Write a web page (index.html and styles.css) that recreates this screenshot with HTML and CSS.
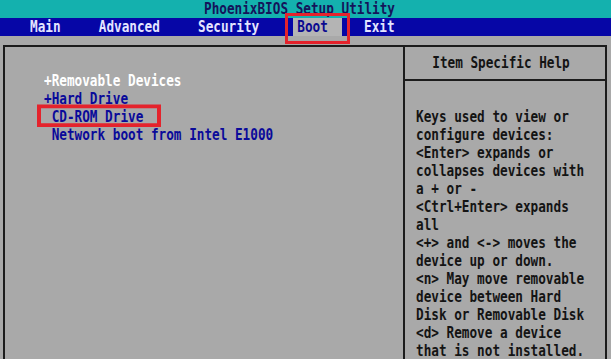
FILE: index.html
```html
<!DOCTYPE html>
<html lang="en">
<head>
  <meta charset="UTF-8" />
  <title>PhoenixBIOS Setup Utility</title>
  <link rel="stylesheet" href="styles.css">
</head>
<body>

<div class="title"><span class="txt">PhoenixBIOS Setup Utility</span></div>

<nav class="menu">
  <span class="tab"><span class="txt">Main</span></span>
  <span class="tab"><span class="txt">Advanced</span></span>
  <span class="tab"><span class="txt">Security</span></span>
  <span class="tab active"><span class="txt">Boot</span><span class="mark mark-tab"></span></span>
  <span class="tab"><span class="txt">Exit</span></span>
</nav>

<div class="screen">
  <div class="frame">
    <div class="boot-list">
      <div class="item white">+Removable Devices</div>
      <div class="item">+Hard Drive</div>
      <div class="item"> <span class="selected">CD-ROM Drive<span class="mark mark-item"></span></span></div>
      <div class="item"> Network boot from Intel E1000</div>
    </div>
    <div class="help">
      <div class="help-title"><span class="txt">Item Specific Help</span></div>
      <div class="help-text">
        <div class="line">Keys used to view or</div>
        <div class="line">configure devices:</div>
        <div class="line">&lt;Enter&gt; expands or</div>
        <div class="line">collapses devices with</div>
        <div class="line">a + or -</div>
        <div class="line">&lt;Ctrl+Enter&gt; expands</div>
        <div class="line">all</div>
        <div class="line">&lt;+&gt; and &lt;-&gt; moves the</div>
        <div class="line">device up or down.</div>
        <div class="line">&lt;n&gt; May move removable</div>
        <div class="line">device between Hard</div>
        <div class="line">Disk or Removable Disk</div>
        <div class="line">&lt;d&gt; Remove a device</div>
        <div class="line">that is not installed.</div>
      </div>
    </div>
  </div>
</div>

</body>
</html>
```

FILE: styles.css
```css
body {
  margin: 0;
  width: 611px;
  height: 359px;
  overflow: hidden;
  background-color: #a9a9a9;
  font-family: "DejaVu Sans Mono", "Liberation Mono", monospace;
  font-size: 12.7px;
  font-weight: bold;
  line-height: 18px;
}

/* the BIOS font is taller than a normal monospace one */
.txt {
  display: inline-block;
  transform: scaleY(1.25);
}

.title {
  height: 18px;
  background-color: #14b1ae;
  color: #14145a;
  text-align: center;
  padding-right: 12px;
}

.menu {
  height: 18px;
  background-color: #0606a6;
  color: #e4e4ff;
  display: flex;
  gap: 5ch;
  padding-left: 30px;
}

.tab {
  position: relative;
}

.tab.active {
  background-color: #b4b4b4;
  color: #0a0a90;
  padding: 0 14px 0 4px;
  margin-left: -6px;
  margin-right: -18px;
  border-left: 2px solid #0606a6;
  border-right: 2px solid #0606a6;
}

.mark {
  position: absolute;
  border: 3px solid #e4232c;
}

.mark-tab {
  left: -8px;
  right: -8px;
  top: -5px;
  bottom: -8px;
}

.screen {
  padding: 9px 4px 0 3px;
}

.frame {
  height: 320px;
  display: grid;
  grid-template-columns: 400px 1fr;
  border: 2px solid #1c1c1c;
  border-bottom: none;
}

.boot-list {
  padding: 25px 0 0 39px;
  color: #0a0a9a;
  border-right: 2px solid #1c1c1c;
}

.item {
  white-space: pre;
  transform: scaleY(1.25);
}

.item.white {
  color: #ffffff;
}

.selected {
  position: relative;
}

.mark-item {
  left: -15px;
  right: -18px;
  top: -2px;
  bottom: -1px;
  border-width: 3px 4px;
}

.help {
  color: #141414;
}

.help-title {
  box-sizing: border-box;
  height: 34px;
  padding: 7px 8px 0 0;
  text-align: center;
  border-bottom: 2px solid #1c1c1c;
}

.help-text {
  padding: 27px 0 0 11px;
}

.line {
  white-space: pre;
  transform: scaleY(1.25);
}
```
